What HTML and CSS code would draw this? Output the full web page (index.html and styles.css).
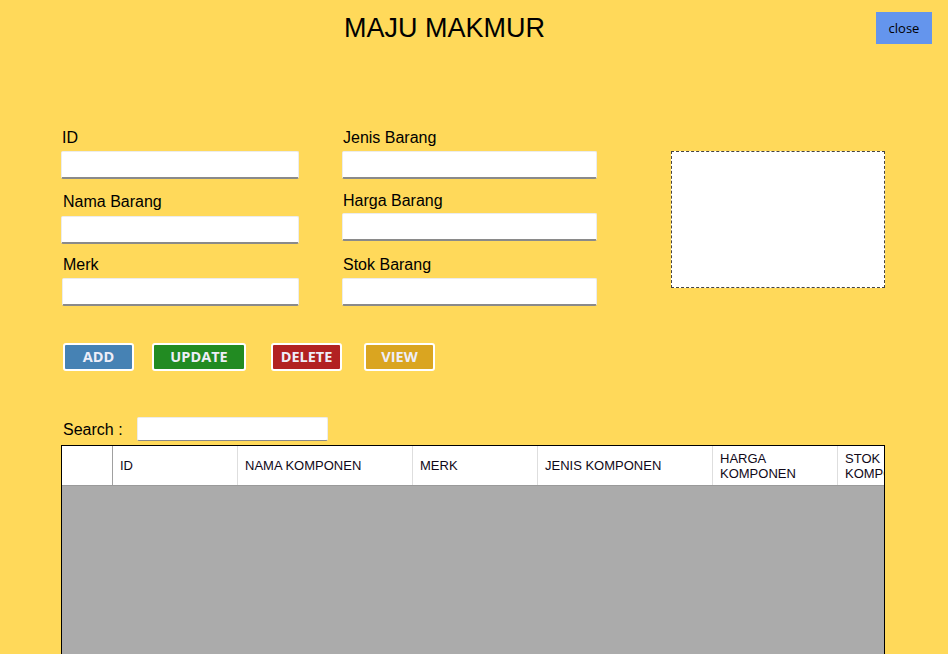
FILE: index.html
```html
<!DOCTYPE html>
<html>
<head>
<meta charset="utf-8">
<title>MAJU MAKMUR</title>
<link rel="stylesheet" href="styles.css">
</head>
<body>
<div class="page">
  <div class="top">
    <h1 class="title">MAJU MAKMUR</h1>
    <button class="close">close</button>
  </div>

  <div class="form">
    <div class="col col1">
      <div class="field f1">
        <label class="lbl">ID</label>
        <div class="input"></div>
      </div>
      <div class="field f2">
        <label class="lbl lbl-in">Nama Barang</label>
        <div class="input"></div>
      </div>
      <div class="field f3">
        <label class="lbl lbl-in">Merk</label>
        <div class="input input-in"></div>
      </div>
    </div>
    <div class="col col2">
      <div class="field g1">
        <label class="lbl">Jenis Barang</label>
        <div class="input"></div>
      </div>
      <div class="field g2">
        <label class="lbl">Harga Barang</label>
        <div class="input"></div>
      </div>
      <div class="field g3">
        <label class="lbl">Stok Barang</label>
        <div class="input"></div>
      </div>
    </div>
    <div class="photo"></div>
  </div>

  <div class="actions">
    <button class="btn add">ADD</button>
    <button class="btn update">UPDATE</button>
    <button class="btn delete">DELETE</button>
    <button class="btn view">VIEW</button>
  </div>

  <div class="search">
    <span class="search-label">Search :</span>
    <div class="input search-input"></div>
  </div>

  <div class="table">
    <div class="thead">
      <div class="th th-row"></div>
      <div class="th">ID</div>
      <div class="th">NAMA KOMPONEN</div>
      <div class="th">MERK</div>
      <div class="th">JENIS KOMPONEN</div>
      <div class="th">HARGA<br>KOMPONEN</div>
      <div class="th">STOK<br>KOMPONEN</div>
    </div>
    <div class="tbody"></div>
  </div>
</div>
</body>
</html>
```

FILE: styles.css
```css
html, body {
  margin: 0;
  padding: 0;
  overflow: hidden;
}
body {
  background: #ffd95a;
  font-family: "Liberation Sans", Arial, sans-serif;
  color: #000;
  width: 948px;
  height: 654px;
}
.page {
  padding-top: 12px;
}
.top {
  display: flex;
  align-items: flex-start;
  height: 32px;
}
.title {
  margin: 0 0 0 344px;
  font-size: 27px;
  line-height: 32px;
  font-weight: normal;
  color: #000;
}
.close {
  margin-left: auto;
  margin-right: 16px;
  width: 56px;
  height: 32px;
  border: none;
  background: #6495ed;
  color: #000;
  font-family: "Open Sans", "DejaVu Sans", sans-serif;
  font-size: 13px;
  padding: 0;
}

.form {
  display: flex;
  align-items: flex-start;
  margin-top: 83px;
  padding-left: 61px;
}
.col {
  display: flex;
  flex-direction: column;
}
.col1 { width: 238px; }
.col2 { width: 255px; margin-left: 43px; margin-top: 1px; }
.field {
  display: flex;
  flex-direction: column;
}
.lbl {
  font-size: 16px;
  line-height: 20px;
  height: 20px;
  padding-left: 1px;
}
.f1 .lbl { margin-top: 1px; height: 19px; line-height: 19px; }
.lbl-in { padding-left: 2px; }
.f1 .input { margin-top: 4px; }
.f2 { margin-top: 13px; }
.f2 .input { margin-top: 4px; }
.f3 { margin-top: 11px; }
.f3 .input { margin-top: 3px; }
.input-in { margin-left: 1px; }
.g1 .input { margin-top: 3px; }
.g2 { margin-top: 12px; }
.g2 .input { margin-top: 2px; }
.g3 { margin-top: 14px; }
.g3 .input { margin-top: 3px; }
.input {
  box-sizing: border-box;
  height: 28px;
  background: #fff;
  border: 1px solid #ececec;
  border-bottom: 2px solid #8a8a8a;
  border-radius: 2px;
}
.photo {
  box-sizing: border-box;
  width: 214px;
  height: 137px;
  margin-left: 74px;
  margin-top: 24px;
  background: #fff;
  border: 1px dashed #444;
}

.actions {
  display: flex;
  margin-top: 37px;
  padding-left: 63px;
}
.btn {
  box-sizing: border-box;
  height: 28px;
  width: 71px;
  border: 2px solid #fff;
  border-radius: 3px;
  color: #eeeef8;
  font-family: "Open Sans", "DejaVu Sans", sans-serif;
  font-weight: bold;
  font-size: 14.5px;
  padding: 0;
  line-height: 22px;
}
.add { background: #4682b4; }
.update { background: #228b22; width: 94px; margin-left: 18px; }
.delete { background: #b22222; margin-left: 25px; }
.view { background: #daa520; margin-left: 22px; }

.search {
  display: flex;
  align-items: center;
  margin-top: 46px;
  padding-left: 63px;
  height: 24px;
}
.search-label {
  font-size: 16px;
  width: 74px;
  padding-top: 1px;
}
.search-input {
  width: 191px;
  height: 24px;
  border-bottom-width: 1px;
}

.table {
  box-sizing: border-box;
  margin-top: 4px;
  margin-left: 61px;
  width: 824px;
  height: 230px;
  border: 1px solid #000;
  background: #ababab;
  overflow: hidden;
}
.thead {
  display: grid;
  grid-template-columns: 51px 125px 175px 125px 175px 125px 125px;
  height: 39px;
  background: #fff;
  border-bottom: 1px solid #9a9a9a;
}
.th {
  box-sizing: border-box;
  border-right: 1px solid #dedede;
  padding-left: 7px;
  font-size: 13px;
  line-height: 15px;
  color: #100818;
  display: flex;
  align-items: center;
  white-space: nowrap;
  overflow: hidden;
}
.th-row {
  border-right: 1px solid #a0a0a0;
}
.tbody {
  height: 200px;
}
```
